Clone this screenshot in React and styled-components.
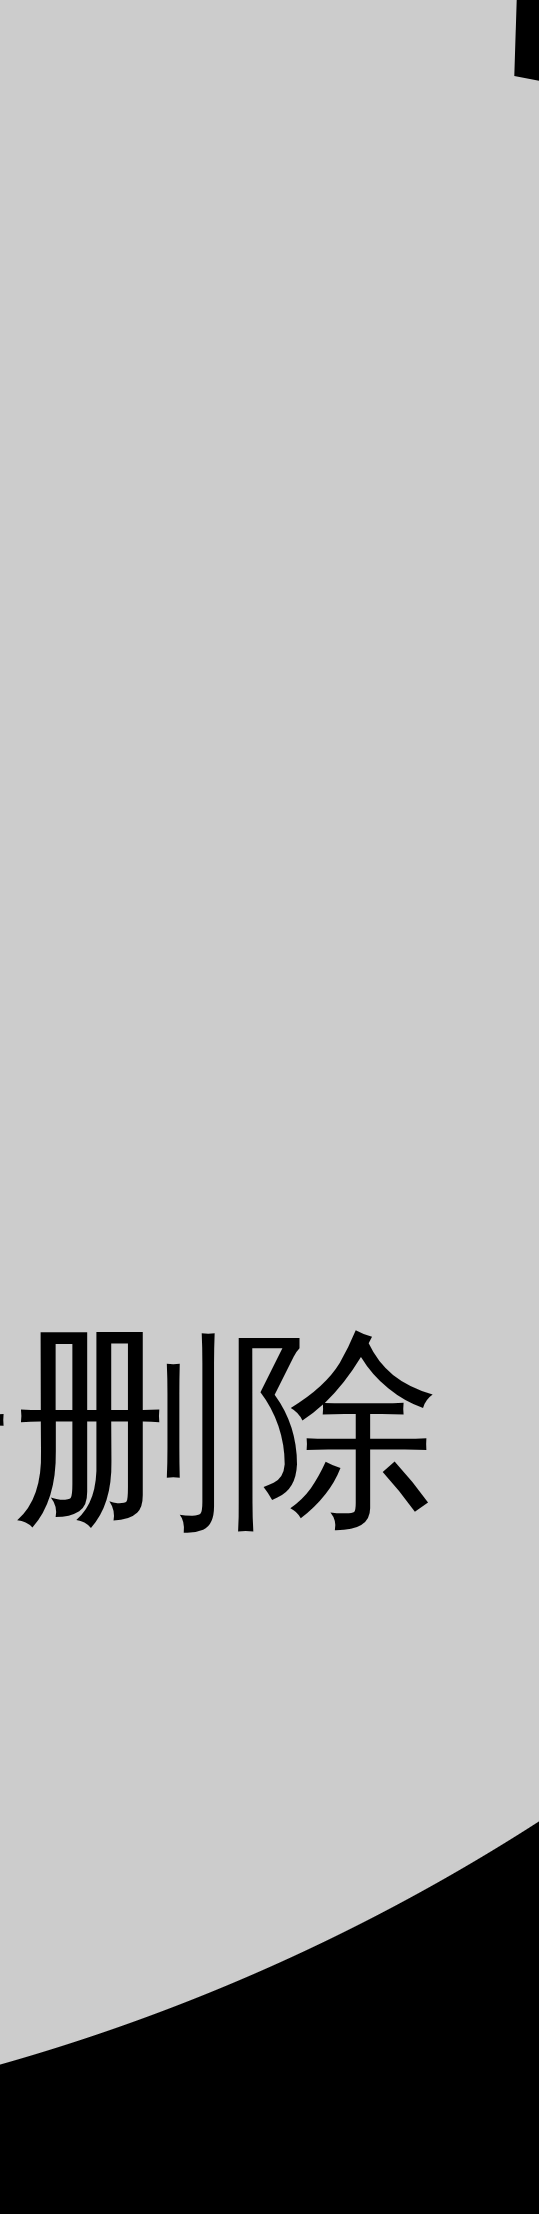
import React from 'react';
import styled, { createGlobalStyle } from 'styled-components';

const GlobalStyle = createGlobalStyle`
  html, body {
    margin: 0;
    padding: 0;
    background: #000;
  }
`;

// big grey disc, black outside of it
const Screen = styled.div`
  width: 539px;
  height: 2214px;
  overflow: hidden;
  display: flex;
  flex-direction: column;
  background: radial-gradient(
    circle 2000px at -544px 140px,
    #cccccc 1999.5px,
    #000 2000.5px
  );
`;

const TopRow = styled.div`
  display: flex;
  justify-content: flex-end;
  height: 81px;
`;

// text is wider than the screen, it spills out to the left
const Label = styled.div`
  display: flex;
  justify-content: flex-end;
  margin-top: 1241px;
  padding-right: 98px;
  white-space: nowrap;
  font-family: 'Liberation Sans', sans-serif;
  font-size: 214px;
  line-height: 1;
  color: #000;
`;

function Notch() {
  return (
    <svg width="25" height="81" viewBox="0 0 25 81">
      <polygon points="2.7,0 25,0 25,80.7 0.3,76" fill="#000" />
    </svg>
  );
}

export default function App() {
  return (
    <>
      <GlobalStyle />
      <Screen>
        <TopRow>
          <Notch />
        </TopRow>
        <Label>
          <span>长按删除</span>
        </Label>
      </Screen>
    </>
  );
}
